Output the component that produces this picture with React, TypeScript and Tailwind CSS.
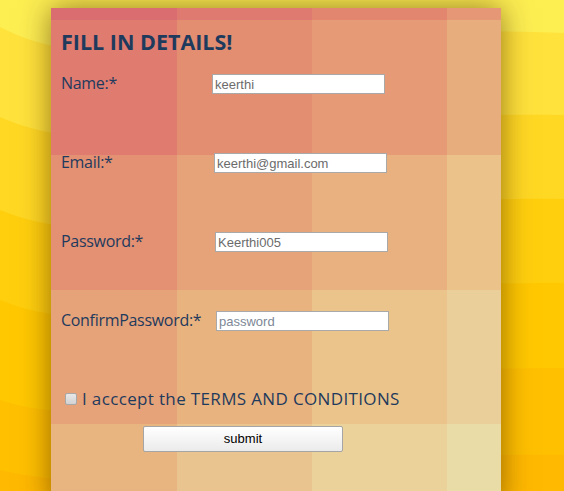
import React from 'react'

const cells = [
  ['#da6d6f', '#df7a70', '#e2866f', '#e69776'],
  ['#e07b70', '#e38d71', '#e69b76', '#e8ad7d'],
  ['#e39073', '#e6a278', '#e8b17f', '#eac28a'],
  ['#e6a379', '#e9b37f', '#ebc48b', '#eacf9a'],
  ['#e8b47f', '#eac48e', '#ebd29a', '#eadca6'],
]

const fields = [
  { label: 'Name:*', value: 'keerthi', type: 'text', shift: 'ml-[0px]', color: 'text-[#6b6b6b]' },
  { label: 'Email:*', value: 'keerthi@gmail.com', type: 'text', shift: 'ml-[2px]', color: 'text-[#6b6b6b]' },
  { label: 'Password:*', value: 'Keerthi005', type: 'text', shift: 'ml-[3px]', color: 'text-[#6b6b6b]' },
  { label: 'ConfirmPassword:*', value: 'password', type: 'text', shift: 'ml-[4px]', color: 'text-[#7d8796]' },
]

function Background() {
  // wavy yellow bands behind the form
  const bands = [
    { d: 'M0,27 C120,90 300,20 564,33 L564,491 L0,491 Z', fill: '#ffe23c' },
    { d: 'M0,117 C120,170 300,110 564,115 L564,491 L0,491 Z', fill: '#ffd824' },
    { d: 'M0,210 C120,260 300,195 564,199 L564,491 L0,491 Z', fill: '#ffcf0e' },
    { d: 'M0,300 C120,350 300,280 564,283 L564,491 L0,491 Z', fill: '#ffc800' },
    { d: 'M0,400 C120,440 300,365 564,368 L564,491 L0,491 Z', fill: '#ffc000' },
    { d: 'M0,470 C120,500 300,452 564,455 L564,491 L0,491 Z', fill: '#ffb900' },
  ]
  return (
    <svg className="absolute inset-0 w-full h-full" viewBox="0 0 564 491" preserveAspectRatio="none">
      <rect width="564" height="491" fill="#fdee52" />
      {bands.map((b, i) => (
        <path key={i} d={b.d} fill={b.fill} />
      ))}
    </svg>
  )
}

export default function App() {
  return (
    <div className="relative w-full h-[491px] overflow-hidden">
      <Background />

      <div className="relative pt-[8px] pl-[51px]">
        <div className="relative w-[450px] h-[500px] shadow-[0_0_28px_rgba(60,30,0,0.55)]">
          {/* plaid backdrop */}
          <div className="absolute inset-0 grid grid-cols-[126px_135px_135px_1fr] grid-rows-[12px_135px_135px_134px_1fr]">
            {cells.flat().map((c, i) => (
              <div key={i} style={{ backgroundColor: c }} />
            ))}
          </div>

          {/* form */}
          <div className="relative pt-[21px] px-[10px] font-['Open_Sans',sans-serif] text-[#1e3a5d]">
            <h2 className="text-[21.5px] leading-[26px] font-bold">FILL IN DETAILS!</h2>

            <div className="mt-[19px] flex flex-col gap-[59px]">
              {fields.map((f) => (
                <div key={f.label} className="flex items-center h-[20px]">
                  <label className="w-[151px] text-[16px] leading-[20px] tracking-[-0.3px] -mt-[2px]">{f.label}</label>
                  <input
                    type={f.type}
                    defaultValue={f.value}
                    className={`${f.shift} ${f.color} w-[173px] h-[20px] border border-[#a9a9a9] bg-white px-[2px] text-[13px] font-['Liberation_Sans',Arial,sans-serif] outline-none`}
                  />
                </div>
              ))}
            </div>

            <div className="mt-[61px] flex items-center h-[14px]">
              <input
                type="checkbox"
                className="appearance-none ml-[4px] w-[12px] h-[12px] rounded-[2px] border border-[#a8a8a8] bg-gradient-to-b from-[#e8e8e8] to-[#d2d2d2]"
              />
              <span className="ml-[5px] text-[17px] leading-[20px] tracking-[0.35px]">I acccept the TERMS AND CONDITIONS</span>
            </div>

            <div className="mt-[19px] pl-[82px]">
              <button className="w-[200px] h-[26px] rounded-[2px] border border-[#a5a5a5] bg-gradient-to-b from-[#ffffff] to-[#ebebeb] text-[13px] text-black font-['Liberation_Sans',Arial,sans-serif]">
                submit
              </button>
            </div>
          </div>
        </div>
      </div>
    </div>
  )
}
